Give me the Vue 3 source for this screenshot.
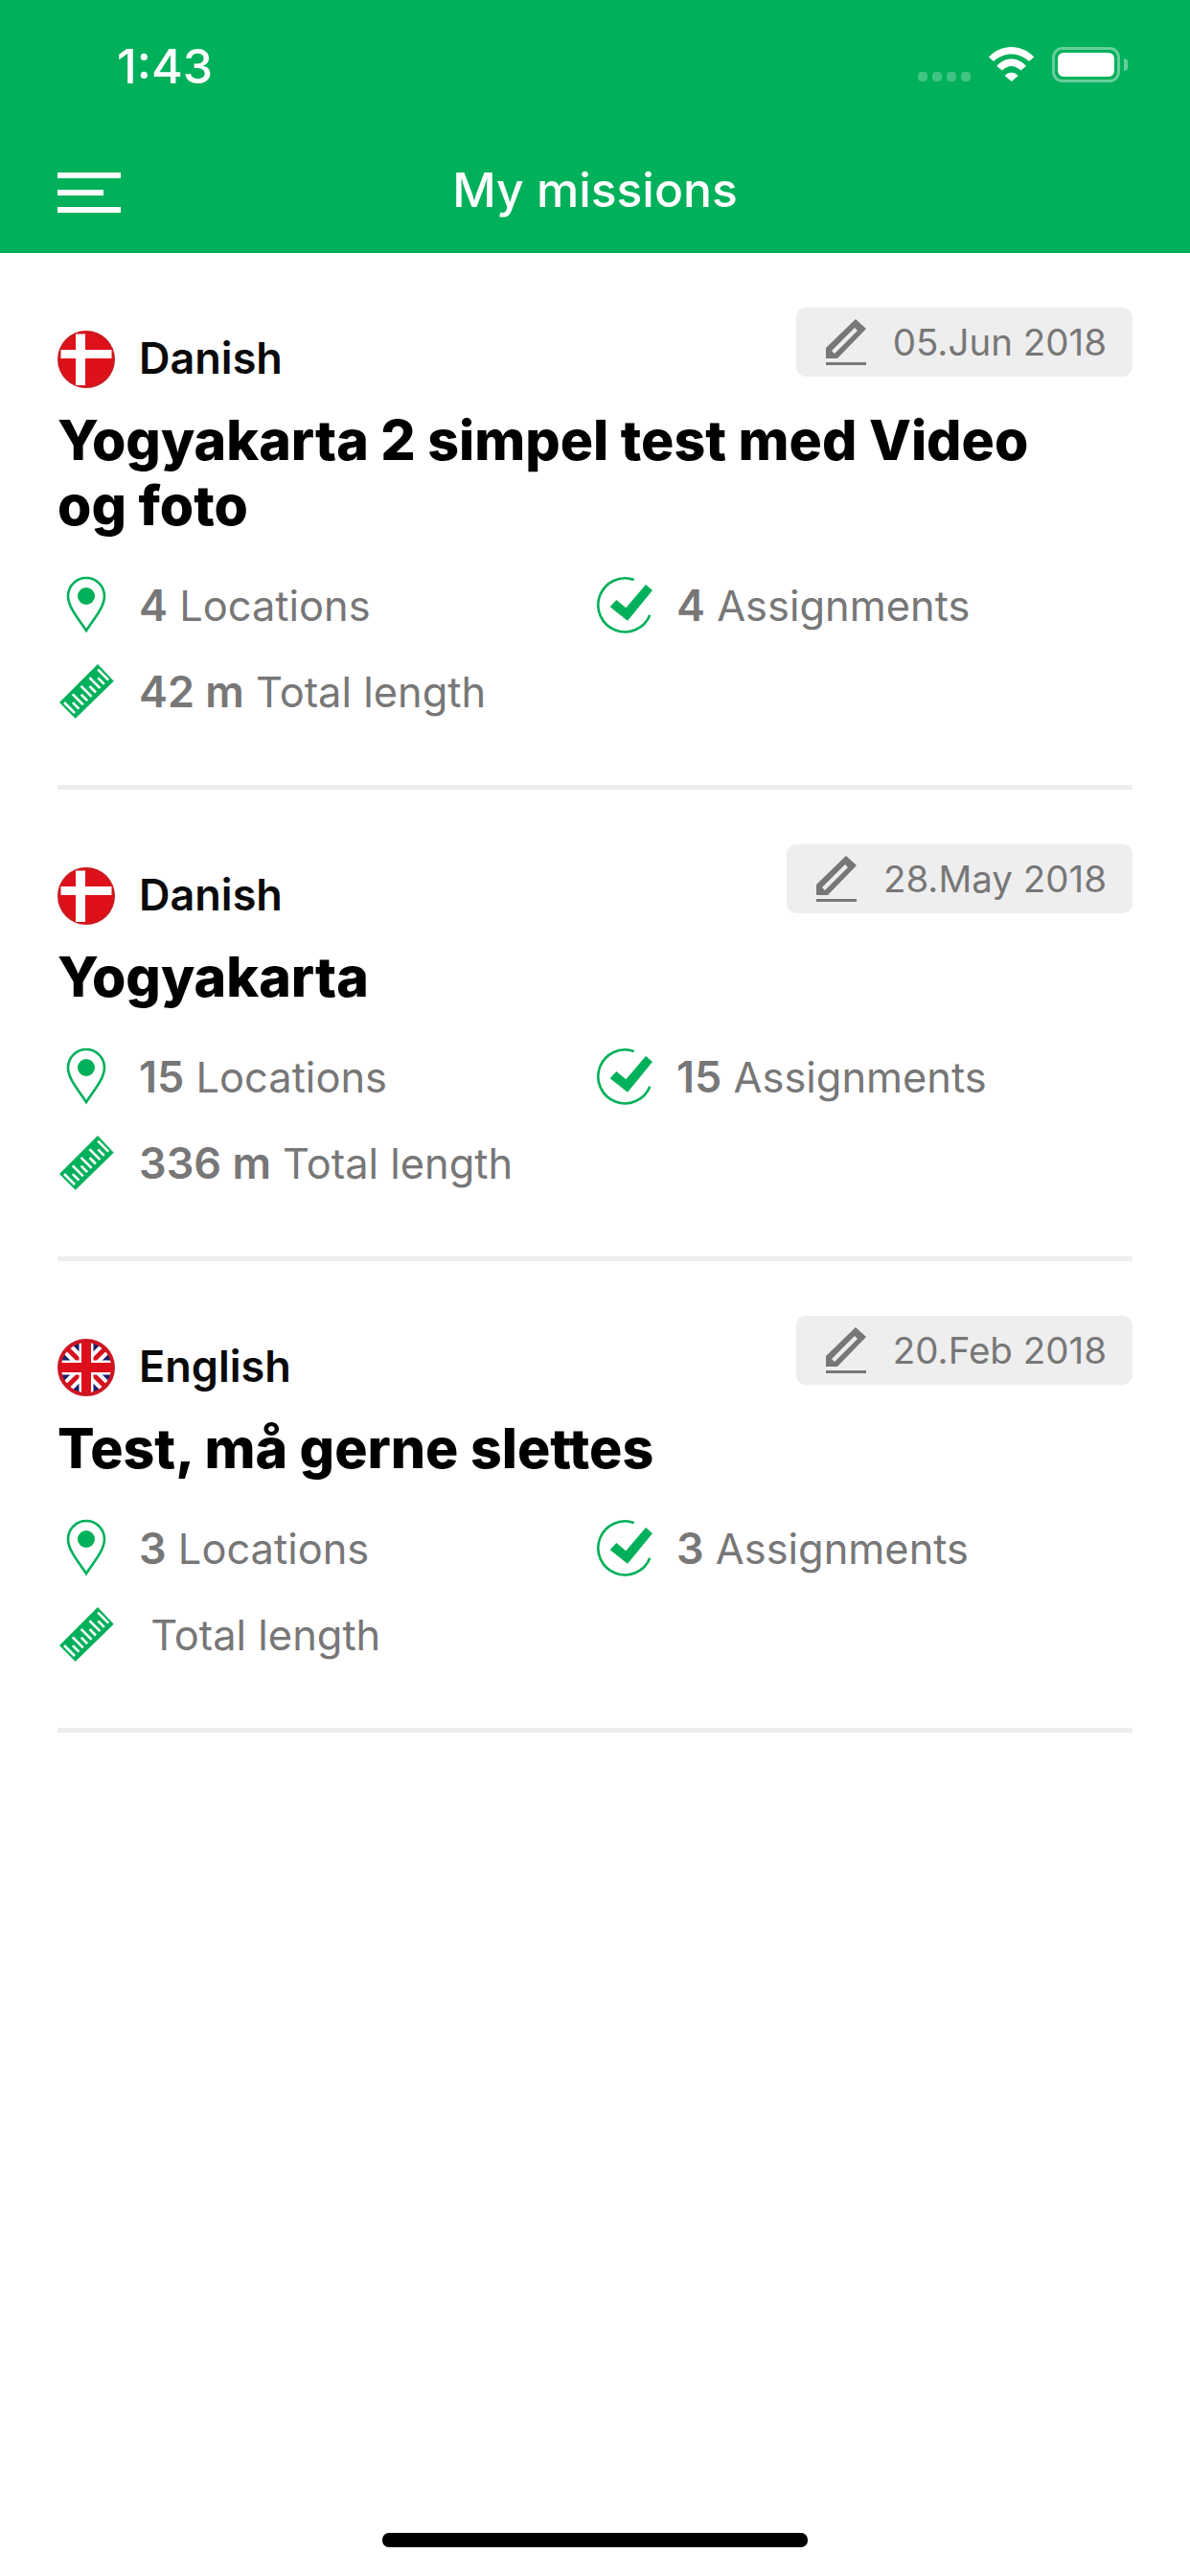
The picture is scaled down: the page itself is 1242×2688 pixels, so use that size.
<template>
  <div class="screen">
    <header class="top">
      <div class="status">
        <span class="time">1:43</span>
        <div class="status-right">
          <div class="signal"><i v-for="n in 4" :key="n"></i></div>
          <svg class="wifi" viewBox="0 0 48 37" width="48" height="37">
            <path d="M0 10.5C13 -3.5 34 -3.5 47.3 10.5L42 15C31 5 16 5 5 15Z" fill="#fff" />
            <path d="M8.3 20C16 10 31 10 39 20L33.3 24.5C27 18.5 20 18.5 14 24.5Z" fill="#fff" />
            <path d="M16.7 30C20 25.5 27 25.5 30.7 30L23.7 36Z" fill="#fff" />
          </svg>
          <div class="battery"><div class="level"></div></div>
          <div class="nub"></div>
        </div>
      </div>
      <nav class="nav">
        <div class="menu"><i></i><i class="short"></i><i></i></div>
        <h1>My missions</h1>
        <div></div>
      </nav>
    </header>

    <section v-for="m in missions" :key="m.title" class="mission">
      <div class="head">
        <div class="lang">
          <svg v-if="m.flag === 'dk'" class="flag" viewBox="0 0 60 60" width="60" height="60">
            <circle cx="30" cy="30" r="30" fill="#cf171e" />
            <circle cx="30" cy="30" r="27" fill="#e0101a" />
            <path d="M19 3.5H29V20H56.5V29H29V57H19V29H3.5V20H19Z" fill="#fff" />
          </svg>
          <svg v-else class="flag" viewBox="0 0 60 60" width="60" height="60">
            <defs>
              <clipPath id="uk"><circle cx="30" cy="30" r="27" /></clipPath>
            </defs>
            <g clip-path="url(#uk)">
              <rect width="60" height="60" fill="#1a1f6e" />
              <path d="M0 0L60 60M60 0L0 60" stroke="#fff" stroke-width="13" />
              <path d="M6 6L24 24M54 6L36 24M6 54L24 36M54 54L36 36" stroke="#d8101c" stroke-width="5" />
              <path d="M30 0V60M0 30H60" stroke="#fff" stroke-width="15" />
              <path d="M30 0V60M0 30H60" stroke="#de0f1c" stroke-width="10" />
            </g>
            <circle cx="30" cy="30" r="28" fill="none" stroke="#cc1622" stroke-width="4" />
          </svg>
          <span>{{ m.lang }}</span>
        </div>
        <div class="date">
          <svg viewBox="0 0 42 48" width="42" height="48">
            <path fill-rule="evenodd" d="M0 30L31 0L42 10L12 41H0ZM6 33L9 36L33 12L30 9Z" fill="#777" />
            <rect y="45" width="42" height="3" fill="#777" />
          </svg>
          <span>{{ m.date }}</span>
        </div>
      </div>
      <h2>{{ m.title }}</h2>
      <div class="stats">
        <div class="stat">
          <span class="ico">
            <svg class="pin" viewBox="0 0 42 60" width="42" height="60">
              <path d="M21 57C14 46 2 33 2 21A19 19 0 0 1 40 21C40 33 28 46 21 57Z" fill="none" stroke="#00b05a" stroke-width="2.6" />
              <circle cx="21" cy="21" r="9" fill="#00b05a" />
            </svg>
          </span>
          <span><b>{{ m.locations }}</b>&nbsp;Locations</span>
        </div>
        <div class="stat">
          <span class="ico">
            <svg viewBox="0 0 60 60" width="60" height="60">
              <path d="M40.7 4A28 28 0 1 0 57.3 40.7" fill="none" stroke="#00b05a" stroke-width="2.6" />
              <path d="M15.7 32.3L22.3 25L32.3 33.3L53 9L60 15L34 46.7Z" fill="#00b05a" />
            </svg>
          </span>
          <span><b>{{ m.assignments }}</b>&nbsp;Assignments</span>
        </div>
        <div class="stat wide">
          <span class="ico">
            <svg class="ruler" viewBox="0 0 57 57" width="57" height="57">
              <path d="M40 0L56.7 17.7L16.7 56.7L0 40Z" fill="#00b05a" />
              <path
                v-for="t in ticks"
                :key="t.x"
                :d="`M${t.x} ${t.y}L${t.x - t.len} ${t.y - t.len}`"
                stroke="#fff"
                stroke-width="2.6"
              />
            </svg>
          </span>
          <span><b>{{ m.length }}</b>&nbsp;Total length</span>
        </div>
      </div>
    </section>

    <div class="home"></div>
  </div>
</template>

<script setup>
const missions = [
  {
    flag: 'dk',
    lang: 'Danish',
    date: '05.Jun 2018',
    title: 'Yogyakarta 2 simpel test med Video og foto',
    locations: 4,
    assignments: 4,
    length: '42 m'
  },
  {
    flag: 'dk',
    lang: 'Danish',
    date: '28.May 2018',
    title: 'Yogyakarta',
    locations: 15,
    assignments: 15,
    length: '336 m'
  },
  {
    flag: 'uk',
    lang: 'English',
    date: '20.Feb 2018',
    title: 'Test, må gerne slettes',
    locations: 3,
    assignments: 3,
    length: ''
  }
]

// ruler marks, every other one is long
const ticks = Array.from({ length: 9 }, (_, i) => ({
  x: 16 + i * 4.4,
  y: 51 - i * 4.3,
  len: i % 2 === 0 ? 11 : 6.5
}))
</script>

<style scoped>
.screen {
  width: 1242px;
  height: 2688px;
  background: #fff;
  display: flex;
  flex-direction: column;
  font-family: Inter, "Noto Sans", sans-serif;
  overflow: hidden;
}

.top {
  background: #00b05a;
  color: #fff;
  height: 264px;
}

.status {
  height: 132px;
  padding: 46px 65px 0 122px;
  box-sizing: border-box;
  display: flex;
  justify-content: space-between;
}

.time {
  font-size: 50px;
  font-weight: 500;
  line-height: 46px;
}

.status-right {
  display: flex;
  align-items: flex-start;
  margin-top: 3px;
}

.signal {
  display: flex;
  gap: 5px;
  margin: 26px 19px 0 0;
}

.signal i {
  width: 10px;
  height: 10px;
  border-radius: 4px;
  background: rgba(255, 255, 255, 0.25);
}

.wifi {
  margin-right: 18px;
}

.battery {
  width: 71px;
  height: 37px;
  padding: 3px;
  box-sizing: border-box;
  border: 3px solid rgba(255, 255, 255, 0.4);
  border-radius: 11px;
}

.level {
  height: 100%;
  background: #fff;
  border-radius: 6px;
}

.nub {
  width: 4px;
  height: 13px;
  margin: 12px 0 0 4px;
  background: rgba(255, 255, 255, 0.4);
  border-radius: 0 6px 6px 0;
}

.nav {
  height: 132px;
  padding: 0 60px;
  display: grid;
  grid-template-columns: 1fr auto 1fr;
  align-items: center;
}

.menu {
  display: flex;
  flex-direction: column;
  gap: 12px;
  margin-top: 6px;
}

.menu i {
  display: block;
  width: 66px;
  height: 6px;
  background: #fff;
}

.menu i.short {
  width: 48px;
}

h1 {
  margin: 0;
  font-size: 49.8px;
  font-weight: 500;
  line-height: 60px;
}

.mission {
  margin: 0 60px;
  padding: 57px 0 53px;
  border-bottom: 5px solid #eeeeee;
}

.head {
  display: flex;
  justify-content: space-between;
  align-items: flex-start;
}

.lang {
  display: flex;
  align-items: center;
  gap: 25px;
  margin-top: 24px;
  font-size: 45px;
  font-weight: 600;
  line-height: 60px;
  color: #0a0a0a;
}

.lang span {
  margin-top: -3px;
}

.date {
  display: flex;
  align-items: center;
  gap: 28px;
  height: 72px;
  padding: 0 27px 0 31px;
  box-sizing: border-box;
  background: #eeeeee;
  border-radius: 10px;
  color: #777;
  font-size: 38.5px;
}

h2 {
  margin: 21px 0 0;
  max-width: 1040px;
  font-size: 57.2px;
  font-weight: 800;
  line-height: 68px;
  color: #000;
}

.stats {
  display: grid;
  grid-template-columns: 561px 1fr;
  margin-top: 24px;
}

.stat {
  display: flex;
  align-items: center;
  height: 90px;
  color: #777;
  font-size: 43.4px;
}

.stat.wide {
  grid-column: 1 / -1;
}

.stat b {
  font-size: 45px;
  font-weight: 600;
}

.ico {
  width: 85px;
  flex: none;
  display: flex;
}

.pin {
  margin-left: 9px;
}

.ruler {
  margin-left: 2px;
}

.home {
  width: 444px;
  height: 15px;
  margin: auto auto 30px;
  background: #000;
  border-radius: 7px;
}
</style>

<style>
html,
body {
  margin: 0;
  background: #fff;
}
</style>
